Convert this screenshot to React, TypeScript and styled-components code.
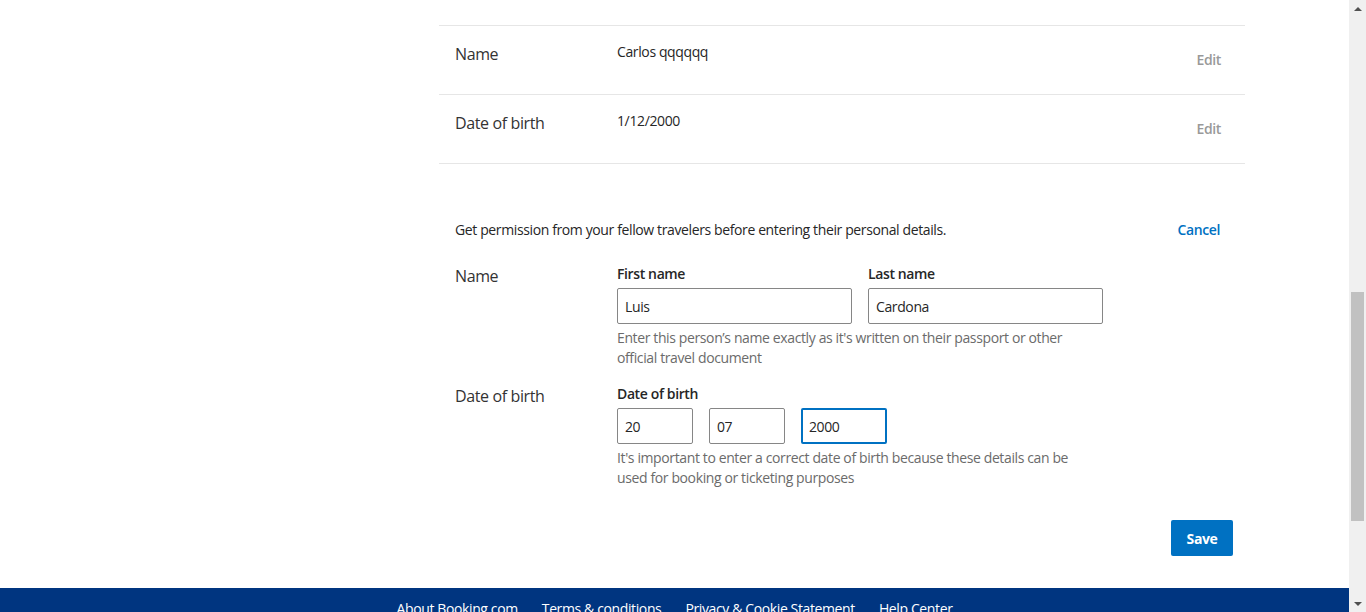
import { createGlobalStyle } from 'styled-components';
import styled from 'styled-components';

const GlobalStyle = createGlobalStyle`
  html, body {
    margin: 0;
    padding: 0;
    overflow: hidden;
    background: #fff;
  }
  body {
    font-family: 'Open Sans', 'Noto Sans', sans-serif;
    color: #262626;
    letter-spacing: -0.38px;
  }
  * {
    box-sizing: border-box;
  }
`;

const Page = styled.div`
  display: flex;
  width: 1366px;
  height: 612px;
  overflow: hidden;
`;

const Main = styled.div`
  flex: 1;
  display: flex;
  flex-direction: column;
  min-width: 0;
`;

const Content = styled.div`
  width: 806px;
  margin-left: 439px;
  padding-top: 25px;
`;

const Rows = styled.div`
  border-bottom: 1px solid #e6e6e6;
`;

const InfoRow = styled.div`
  display: grid;
  grid-template-columns: 162px 1fr auto;
  height: 69px;
  padding: 16px 24px 0 16px;
  border-top: 1px solid #e6e6e6;
`;

const RowLabel = styled.div`
  font-size: 16px;
  line-height: 24px;
  color: #333;
`;

const RowValue = styled.div`
  font-size: 14px;
  line-height: 20px;
  color: #262626;
`;

const EditLink = styled.a`
  margin-top: 8px;
  font-size: 14px;
  line-height: 20px;
  font-weight: 600;
  color: #999;
  cursor: pointer;
`;

const Form = styled.div`
  padding: 56px 25px 0 16px;
`;

const FormHeader = styled.div`
  display: flex;
  justify-content: space-between;
  font-size: 14px;
  line-height: 20px;
  margin-bottom: 24px;
`;

const CancelLink = styled.a`
  color: #0071c2;
  font-weight: 600;
  cursor: pointer;
`;

const FieldRow = styled.div`
  display: grid;
  grid-template-columns: 162px 1fr;
  margin-bottom: 16px;
`;

const Inputs = styled.div`
  display: flex;
  gap: 16px;
`;

const Field = styled.label`
  display: flex;
  flex-direction: column;
  gap: 4px;
`;

const FieldTitle = styled.span`
  font-size: 14px;
  line-height: 20px;
  font-weight: 600;
  color: #262626;
`;

const TextInput = styled.input<{ $w: number; $focus?: boolean }>`
  width: ${(p) => p.$w}px;
  height: 36px;
  padding: 0 ${(p) => (p.$focus ? 6 : 7)}px;
  border: ${(p) => (p.$focus ? '2px solid #0071c2' : '1px solid #868686')};
  border-radius: 2px;
  font-family: inherit;
  font-size: 14px;
  letter-spacing: -0.38px;
  color: #262626;
  outline: none;
  background: #fff;
`;

const Hint = styled.div`
  width: 480px;
  margin-top: 4px;
  font-size: 14px;
  line-height: 20px;
  color: #6b6b6b;
`;

const Actions = styled.div`
  display: flex;
  justify-content: flex-end;
  padding: 16px 12px 32px 0;
`;

const SaveButton = styled.button`
  width: 62px;
  height: 36px;
  border: none;
  border-radius: 2px;
  background: #0071c2;
  color: #fff;
  font-family: inherit;
  font-size: 14px;
  font-weight: 700;
  letter-spacing: -0.38px;
  cursor: pointer;
`;

const Footer = styled.footer`
  flex: 1;
  background: #003580;
  display: flex;
  justify-content: center;
  gap: 24px;
  padding-top: 11px;
`;

const FooterLink = styled.a`
  color: #fff;
  font-size: 14px;
  line-height: 20px;
  text-decoration: none;
`;

const Scrollbar = styled.div`
  width: 17px;
  background: #f0f0f0;
  display: flex;
  flex-direction: column;
  align-items: center;
`;

const Arrow = styled.div<{ $down?: boolean }>`
  height: 17px;
  width: 17px;
  display: flex;
  align-items: center;
  justify-content: center;
  &::after {
    content: '';
    border-left: 4px solid transparent;
    border-right: 4px solid transparent;
    ${(p) => (p.$down ? 'border-top: 4px solid #505050;' : 'border-bottom: 4px solid #505050;')}
  }
`;

const Track = styled.div`
  flex: 1;
  width: 100%;
  display: flex;
  flex-direction: column;
  align-items: center;
  padding-top: 275px;
  padding-bottom: 74px;
`;

const Thumb = styled.div`
  width: 13px;
  flex: 1;
  background: #c1c1c1;
`;

export default function App() {
  return (
    <>
      <GlobalStyle />
      <Page>
        <Main>
          <Content>
            <Rows>
              <InfoRow>
                <RowLabel>Name</RowLabel>
                <RowValue>Carlos qqqqqq</RowValue>
                <EditLink>Edit</EditLink>
              </InfoRow>
              <InfoRow>
                <RowLabel>Date of birth</RowLabel>
                <RowValue>1/12/2000</RowValue>
                <EditLink>Edit</EditLink>
              </InfoRow>
            </Rows>
            <Form>
              <FormHeader>
                <span>Get permission from your fellow travelers before entering their personal details.</span>
                <CancelLink>Cancel</CancelLink>
              </FormHeader>
              <FieldRow>
                <RowLabel>Name</RowLabel>
                <div>
                  <Inputs>
                    <Field>
                      <FieldTitle>First name</FieldTitle>
                      <TextInput $w={235} defaultValue="Luis" />
                    </Field>
                    <Field>
                      <FieldTitle>Last name</FieldTitle>
                      <TextInput $w={235} defaultValue="Cardona" />
                    </Field>
                  </Inputs>
                  <Hint>Enter this person’s name exactly as it's written on their passport or other official travel document</Hint>
                </div>
              </FieldRow>
              <FieldRow>
                <RowLabel>Date of birth</RowLabel>
                <div>
                  <Field>
                    <FieldTitle>Date of birth</FieldTitle>
                    <Inputs>
                      <TextInput $w={76} defaultValue="20" />
                      <TextInput $w={76} defaultValue="07" />
                      <TextInput $w={86} $focus defaultValue="2000" />
                    </Inputs>
                  </Field>
                  <Hint>It's important to enter a correct date of birth because these details can be used for booking or ticketing purposes</Hint>
                </div>
              </FieldRow>
            </Form>
            <Actions>
              <SaveButton>Save</SaveButton>
            </Actions>
          </Content>
          <Footer>
            <FooterLink>About Booking.com</FooterLink>
            <FooterLink>Terms &amp; conditions</FooterLink>
            <FooterLink>Privacy &amp; Cookie Statement</FooterLink>
            <FooterLink>Help Center</FooterLink>
          </Footer>
        </Main>
        <Scrollbar>
          <Arrow />
          <Track>
            <Thumb />
          </Track>
          <Arrow $down />
        </Scrollbar>
      </Page>
    </>
  );
}
